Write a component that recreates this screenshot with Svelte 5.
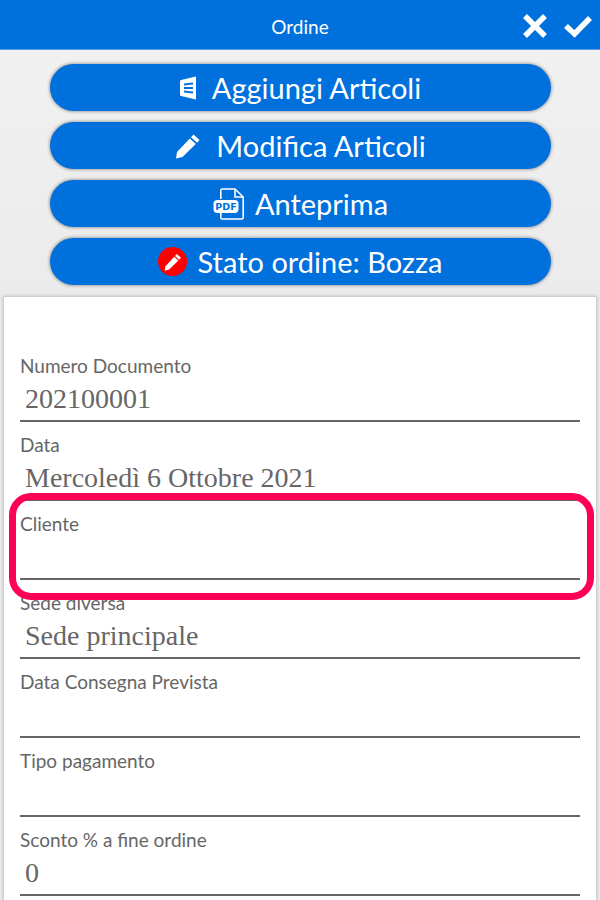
<script>
  const fields = [
    { label: "Numero Documento", value: "202100001" },
    { label: "Data", value: "Mercoledì 6 Ottobre 2021" },
    { label: "Cliente", value: "" },
    { label: "Sede diversa", value: "Sede principale" },
    { label: "Data Consegna Prevista", value: "" },
    { label: "Tipo pagamento", value: "" },
    { label: "Sconto % a fine ordine", value: "0" },
  ];
</script>

<div class="page">
  <header class="topbar">
    <span class="title">Ordine</span>
    <div class="actions">
      <svg width="26" height="26" viewBox="0 0 26 26"><path d="M3 3 L23 23 M23 3 L3 23" stroke="#fff" stroke-width="5.5" fill="none" /></svg>
      <svg width="30" height="24" viewBox="0 0 30 24"><path d="M3 12 L11.5 20 L27 4" stroke="#fff" stroke-width="5.5" fill="none" /></svg>
    </div>
  </header>

  <div class="buttons">
    <button>
      <svg class="ic" width="17" height="24" viewBox="0 0 17 24">
        <path fill="#fff" fill-rule="evenodd" d="M1 4 L16 0.5 V23.5 L1 20 Q0 20 0 18.5 V5.5 Q0 4 1 4 Z M4 7.5 V9.5 L13 8.5 V6.5 Z M4 11 V13 L13 13 V11 Z M4 14.5 V16.5 L13 17.5 V15.5 Z" />
      </svg>
      Aggiungi Articoli
    </button>
    <button>
      <svg class="ic" width="26" height="26" viewBox="0 0 26 26">
        <path fill="#fff" d="M18.5 1.5 L24.5 7 L22 9.8 L16 4.2 Z M14.8 5.5 L20.8 11 L7.5 24 L1 25.5 L2 19 Z" />
      </svg>
      Modifica Articoli
    </button>
    <button>
      <svg class="ic pdf" width="32" height="32" viewBox="0 0 32 32">
        <path fill="none" stroke="#fff" stroke-width="1.6" d="M7.8 11 V2.5 Q7.8 1 9.3 1 H22 L30.2 9 V29.5 Q30.2 31 28.7 31 H9.3 Q7.8 31 7.8 29.5 V25" />
        <path fill="none" stroke="#fff" stroke-width="1.6" d="M22 1 V9 H30.2" />
        <rect x="0.5" y="12" width="25" height="13" rx="4" fill="#fff" />
        <text x="13" y="22" class="pdf-text">PDF</text>
      </svg>
      Anteprima
    </button>
    <button>
      <span class="dot">
        <svg width="18" height="18" viewBox="0 0 26 26">
          <path fill="#fff" d="M18.5 1.5 L24.5 7 L22 9.8 L16 4.2 Z M14.8 5.5 L20.8 11 L7.5 24 L1 25.5 L2 19 Z" />
        </svg>
      </span>
      Stato ordine: Bozza
    </button>
  </div>

  <section class="card">
    {#each fields as f}
      <div class="field">
        <label>{f.label}</label>
        <div class="value">{f.value}</div>
      </div>
    {/each}
    <div class="highlight"></div>
  </section>
</div>

<style>
  :global(body) {
    margin: 0;
    background: #eeeeee;
  }

  .page {
    width: 600px;
    height: 900px;
    overflow: hidden;
    position: relative;
    font-family: Lato, sans-serif;
    background: linear-gradient(#f2f2f2, #ebebeb 300px);
  }

  .topbar {
    height: 49px;
    background: #0070dc;
    border-bottom: 1px solid #5c9fe0;
    box-sizing: content-box;
    display: flex;
    align-items: center;
    justify-content: center;
    position: relative;
  }

  .title {
    color: #fff;
    font-size: 19px;
    margin-top: 3px;
  }

  .actions {
    position: absolute;
    right: 7px;
    top: 13px;
    display: flex;
    align-items: center;
    gap: 15px;
  }

  .buttons {
    display: flex;
    flex-direction: column;
    gap: 11px;
    padding: 14px 49px 0 50px;
  }

  button {
    height: 47px;
    border: 0;
    border-radius: 24px;
    background: #0070dc;
    color: #fff;
    font-family: Lato, sans-serif;
    font-size: 29px;
    padding: 0;
    display: flex;
    align-items: center;
    justify-content: center;
    gap: 10px;
    box-shadow: 0 0 3px 1px rgba(0, 0, 0, 0.3);
  }

  .ic {
    flex: none;
    margin-right: 5px;
  }

  .ic.pdf {
    margin-right: 0;
  }

  .pdf-text {
    font-family: "DejaVu Sans", sans-serif;
    font-weight: 700;
    font-size: 9.5px;
    fill: #0070dc;
    text-anchor: middle;
  }

  .dot {
    width: 29px;
    height: 29px;
    border-radius: 50%;
    background: #ff0000;
    display: flex;
    align-items: center;
    justify-content: center;
    flex: none;
  }

  .card {
    position: absolute;
    top: 297px;
    left: 4px;
    width: 592px;
    height: 620px;
    background: #fff;
    box-shadow: 0 0 3px 1px rgba(0, 0, 0, 0.2);
    box-sizing: border-box;
    padding: 46px 16px 0;
  }

  .field {
    height: 79px;
    box-sizing: border-box;
    display: flex;
    flex-direction: column;
    border-bottom: 2px solid #666;
  }

  label {
    font-size: 19px;
    line-height: 24px;
    color: #666;
    margin-top: 11px;
  }

  .value {
    font-family: "Liberation Serif", serif;
    font-size: 28px;
    line-height: 32px;
    color: #666;
    padding-left: 5px;
    margin-top: 5px;
  }

  .highlight {
    position: absolute;
    left: 5px;
    top: 196px;
    width: 585px;
    height: 107px;
    box-sizing: border-box;
    border: 7px solid #ff0055;
    border-radius: 22px;
  }
</style>
